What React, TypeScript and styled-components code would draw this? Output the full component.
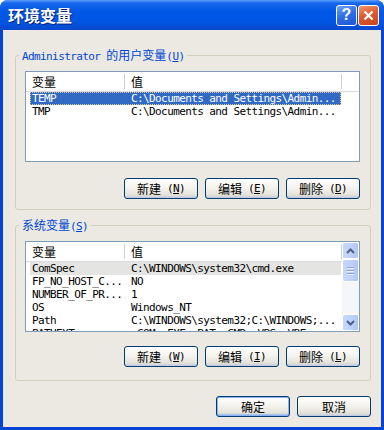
import React from "react";
import styled, { createGlobalStyle } from "styled-components";

type SelState = "active" | "inactive" | undefined;

interface IVar {
  name: string;
  value: string;
  sel?: SelState;
}

const userVars: IVar[] = [
  { name: "TEMP", value: "C:\\Documents and Settings\\Admin...", sel: "active" },
  { name: "TMP", value: "C:\\Documents and Settings\\Admin..." },
];

const sysVars: IVar[] = [
  { name: "ComSpec", value: "C:\\WINDOWS\\system32\\cmd.exe", sel: "inactive" },
  { name: "FP_NO_HOST_C...", value: "NO" },
  { name: "NUMBER_OF_PR...", value: "1" },
  { name: "OS", value: "Windows_NT" },
  { name: "Path", value: "C:\\WINDOWS\\system32;C:\\WINDOWS;..." },
  { name: "PATHEXT", value: ".COM;.EXE;.BAT;.CMD;.VBS;.VBE;..." },
];

const MONO = `"DejaVu Sans Mono", "Liberation Mono", monospace`;

const GlobalStyle = createGlobalStyle`
  html, body {
    margin: 0;
    padding: 0;
    background: #ffffff;
  }
  body {
    font-family: "Noto Sans CJK SC", "Liberation Sans", sans-serif;
    font-size: 12px;
    color: #000;
  }
`;

const Window = styled.div`
  width: 384px;
  height: 430px;
  display: flex;
  flex-direction: column;
  border-radius: 8px 8px 0 0;
  overflow: hidden;
  background: #0842d6;
`;

const TitleBar = styled.div`
  height: 30px;
  flex: none;
  display: flex;
  align-items: center;
  gap: 1px;
  padding: 0 5px 0 8px;
  background: linear-gradient(
    180deg,
    #5ea2ff 0%,
    #1667ec 10%,
    #0058e6 40%,
    #0055e2 75%,
    #0b47cc 100%
  );
`;

const Title = styled.div`
  flex: 1;
  color: #fff;
  font-size: 16px;
  font-weight: 700;
  line-height: 30px;
  text-shadow: 1px 1px 0 #0a1f70;
`;

const CaptionButton = styled.div<{ $tone: "help" | "close" }>`
  width: 21px;
  height: 21px;
  box-sizing: border-box;
  border: 1px solid #ffffff;
  border-radius: 3px;
  display: flex;
  align-items: center;
  justify-content: center;
  color: #fff;
  font-family: "Liberation Sans", sans-serif;
  font-weight: 700;
  font-size: 16px;
  background: ${(p) =>
    p.$tone === "close"
      ? "linear-gradient(160deg, #f19a78 0%, #e0592e 45%, #c8461c 100%)"
      : "linear-gradient(160deg, #6fa2f7 0%, #2e6ae6 50%, #1e56d6 100%)"};
`;

const Client = styled.div`
  flex: 1;
  margin: 0 3px 3px 3px;
  background: #ebe9e1;
  display: flex;
  flex-direction: column;
  padding: 18px 10px 0 12px;
`;

const GroupBox = styled.fieldset<{ $top: number; $bottom: number }>`
  margin: ${(p) => p.$top}px 0 0 0;
  min-width: 0;
  border: 1px solid #d0d0bf;
  border-radius: 3px;
  padding: 9px 10px ${(p) => p.$bottom}px 9px;
`;

const Legend = styled.legend`
  padding: 0 3px;
  margin-left: -6px;
  height: 14px;
  line-height: 14px;
  font-size: 12px;
  color: #0046d5;
  white-space: pre;
`;

const Ascii = styled.span`
  font-family: ${MONO};
  font-size: 11px;
  letter-spacing: -0.6px;
`;

const ListBox = styled.div`
  width: 335px;
  height: 91px;
  box-sizing: border-box;
  border: 1px solid #7f9db9;
  background: #ffffff;
  display: flex;
  overflow: hidden;
`;

const ListBody = styled.div`
  flex: 1;
  min-width: 0;
  display: flex;
  flex-direction: column;
`;

const Header = styled.div`
  height: 20px;
  flex: none;
  box-sizing: border-box;
  border-bottom: 1px solid #dcdbe3;
  display: flex;
  align-items: center;
`;

const HeaderCell = styled.div<{ $w: number }>`
  width: ${(p) => p.$w}px;
  height: 15px;
  line-height: 15px;
  box-sizing: border-box;
  padding-left: 6px;
  border-right: 1px solid #cfcedb;
  font-size: 12px;
`;

const Row = styled.div<{ $sel?: SelState }>`
  margin-left: 4px;
  width: 311px;
  height: 13px;
  flex: none;
  display: grid;
  grid-template-columns: 95px 216px;
  line-height: 13px;
  font-family: ${MONO};
  font-size: 11px;
  letter-spacing: -0.6px;
  box-sizing: border-box;
  background: ${(p) =>
    p.$sel === "active" ? "#316ac5" : p.$sel === "inactive" ? "#e4e4e2" : "transparent"};
  color: ${(p) => (p.$sel === "active" ? "#ffffff" : "#000000")};
  outline: ${(p) => (p.$sel === "active" ? "1px dotted #d9c98a" : "none")};
  outline-offset: -1px;
`;

const Cell = styled.div<{ $pad: number }>`
  padding-left: ${(p) => p.$pad}px;
  white-space: nowrap;
  overflow: hidden;
`;

const ScrollBar = styled.div`
  width: 17px;
  flex: none;
  display: flex;
  flex-direction: column;
  background: #f4f6fb;
`;

const ScrollButton = styled.div<{ $h: number }>`
  height: ${(p) => p.$h}px;
  flex: none;
  box-sizing: border-box;
  border: 1px solid #ffffff;
  border-radius: 2px;
  background: linear-gradient(90deg, #c8d8fb 0%, #bdd0f9 60%, #b1c6f4 100%);
  display: flex;
  flex-direction: column;
  align-items: center;
  justify-content: center;
  gap: 1px;
`;

const Track = styled.div`
  flex: 1;
  display: flex;
  flex-direction: column;
`;

const Grip = styled.div`
  width: 7px;
  height: 1px;
  background: #8aa4da;
  border-bottom: 1px solid #eef3ff;
`;

const ButtonRow = styled.div<{ $top: number }>`
  margin-top: ${(p) => p.$top}px;
  display: flex;
  justify-content: flex-end;
  gap: 7px;
`;

const Button = styled.div<{ $default?: boolean }>`
  width: 74px;
  height: 21px;
  box-sizing: border-box;
  border: 1px solid #003c74;
  border-radius: 3px;
  background: linear-gradient(180deg, #ffffff 0%, #f4f3ee 45%, #e6e4dc 80%, #c9cdd8 100%);
  box-shadow: ${(p) =>
    p.$default
      ? "inset 0 0 0 1px #8db2f0, inset 0 -1px 0 1px #a9c3ef"
      : "inset 0 -1px 0 #c2ccdc"};
  display: flex;
  align-items: center;
  justify-content: center;
  font-size: 12px;
  line-height: 19px;
  white-space: pre;
`;

const Key = styled.u`
  text-underline-offset: 1px;
`;

const Arrow = ({ up }: { up?: boolean }) => (
  <svg width="9" height="6" viewBox="0 0 9 6">
    <polyline
      points={up ? "1,5 4.5,1.5 8,5" : "1,1 4.5,4.5 8,1"}
      fill="none"
      stroke="#4d6185"
      strokeWidth="2"
    />
  </svg>
);

const VarList = ({ items, scroll }: { items: IVar[]; scroll?: boolean }) => (
  <ListBox>
    <ListBody>
      <Header>
        <HeaderCell $w={99}>变量</HeaderCell>
        <HeaderCell $w={217}>值</HeaderCell>
      </Header>
      {items.map((v) => (
        <Row key={v.name} $sel={v.sel}>
          <Cell $pad={2}>{v.name}</Cell>
          <Cell $pad={6}>{v.value}</Cell>
        </Row>
      ))}
    </ListBody>
    {scroll && (
      <ScrollBar>
        <ScrollButton $h={17}>
          <Arrow up />
        </ScrollButton>
        <Track>
          <ScrollButton $h={23}>
            <Grip />
            <Grip />
            <Grip />
          </ScrollButton>
        </Track>
        <ScrollButton $h={17}>
          <Arrow />
        </ScrollButton>
      </ScrollBar>
    )}
  </ListBox>
);

const ActionButton = ({ label, k }: { label: string; k: string }) => (
  <Button>
    {label}
    <Ascii> (<Key>{k}</Key>)</Ascii>
  </Button>
);

const App = () => {
  return (
    <>
      <GlobalStyle />
      <Window>
        <TitleBar>
          <Title>环境变量</Title>
          <CaptionButton $tone="help">?</CaptionButton>
          <CaptionButton $tone="close">
            <svg width="11" height="11" viewBox="0 0 11 11">
              <path d="M1.5 1.5 L9.5 9.5 M9.5 1.5 L1.5 9.5" stroke="#fff" strokeWidth="2.2" />
            </svg>
          </CaptionButton>
        </TitleBar>
        <Client>
          <GroupBox $top={0} $bottom={10}>
            <Legend>
              <Ascii>Administrator </Ascii>的用户变量
              <Ascii>
                (<Key>U</Key>)
              </Ascii>
            </Legend>
            <VarList items={userVars} />
            <ButtonRow $top={16}>
              <ActionButton label="新建" k="N" />
              <ActionButton label="编辑" k="E" />
              <ActionButton label="删除" k="D" />
            </ButtonRow>
          </GroupBox>
          <GroupBox $top={8} $bottom={13}>
            <Legend>
              系统变量
              <Ascii>
                (<Key>S</Key>)
              </Ascii>
            </Legend>
            <VarList items={sysVars} scroll />
            <ButtonRow $top={14}>
              <ActionButton label="新建" k="W" />
              <ActionButton label="编辑" k="I" />
              <ActionButton label="删除" k="L" />
            </ButtonRow>
          </GroupBox>
          <ButtonRow $top={15}>
            <Button $default>确定</Button>
            <Button>取消</Button>
          </ButtonRow>
        </Client>
      </Window>
    </>
  );
};

export default App;
